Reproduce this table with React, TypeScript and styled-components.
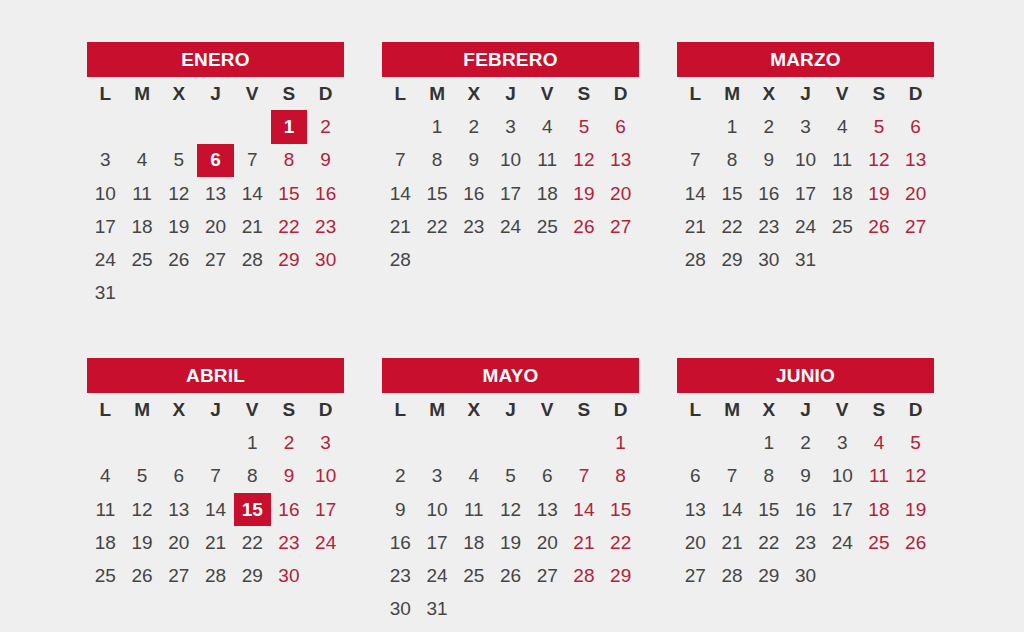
import styled, { createGlobalStyle } from 'styled-components';

const GlobalStyle = createGlobalStyle`
  html, body {
    margin: 0;
    padding: 0;
    background: #efefef;
    font-family: "Liberation Sans", Arial, sans-serif;
  }
`;

const DAY_NAMES = ['L', 'M', 'X', 'J', 'V', 'S', 'D'];

interface IMonth {
  name: string;
  offset: number; // empty cells before day 1 (Monday first)
  days: number;
  holidays: number[];
}

const MONTHS: IMonth[] = [
  { name: 'ENERO', offset: 5, days: 31, holidays: [1, 6] },
  { name: 'FEBRERO', offset: 1, days: 28, holidays: [] },
  { name: 'MARZO', offset: 1, days: 31, holidays: [] },
  { name: 'ABRIL', offset: 4, days: 30, holidays: [15] },
  { name: 'MAYO', offset: 6, days: 31, holidays: [] },
  { name: 'JUNIO', offset: 2, days: 30, holidays: [] },
];

const MonthCard: React.FC<{ month: IMonth }> = ({ month }) => {
  const { name, offset, days, holidays } = month;
  return (
    <MonthWrapper>
      <MonthTitle>{name}</MonthTitle>
      <DaysGrid>
        {DAY_NAMES.map((d) => (
          <DayName key={d}>{d}</DayName>
        ))}
        {Array.from({ length: offset }).map((_, i) => (
          <Day key={`e${i}`} />
        ))}
        {Array.from({ length: days }).map((_, i) => {
          const day = i + 1;
          const col = (offset + i) % 7;
          return (
            <Day key={day} $weekend={col >= 5} $holiday={holidays.includes(day)}>
              {day}
            </Day>
          );
        })}
      </DaysGrid>
    </MonthWrapper>
  );
};

export default function App() {
  return (
    <>
      <GlobalStyle />
      <Page>
        {MONTHS.map((m) => (
          <MonthCard key={m.name} month={m} />
        ))}
      </Page>
    </>
  );
}

const Page = styled.div`
  display: grid;
  grid-template-columns: repeat(3, 257px);
  column-gap: 38px;
  row-gap: 42px;
  padding: 42px 0 0 87px;
  width: 1024px;
  height: 632px;
  box-sizing: border-box;
  overflow: hidden;
`;

const MonthWrapper = styled.section`
  display: flex;
  flex-direction: column;
  align-self: start;
`;

const MonthTitle = styled.h2`
  margin: 0;
  height: 35px;
  display: flex;
  align-items: center;
  justify-content: center;
  background: #c8102e;
  color: #fff;
  font-size: 19px;
  font-weight: bold;
  letter-spacing: 0.2px;
`;

const DaysGrid = styled.div`
  display: grid;
  grid-template-columns: repeat(7, 1fr);
  grid-auto-rows: 33.3px;
`;

const DayName = styled.div`
  display: flex;
  align-items: center;
  justify-content: center;
  font-size: 19px;
  font-weight: bold;
  color: #333;
`;

const Day = styled.div<{ $weekend?: boolean; $holiday?: boolean }>`
  display: flex;
  align-items: center;
  justify-content: center;
  font-size: 19px;
  color: ${(p) => (p.$holiday ? '#fff' : p.$weekend ? '#b3223a' : '#454545')};
  background: ${(p) => (p.$holiday ? '#c8102e' : 'transparent')};
  font-weight: ${(p) => (p.$holiday ? 'bold' : 'normal')};
`;
